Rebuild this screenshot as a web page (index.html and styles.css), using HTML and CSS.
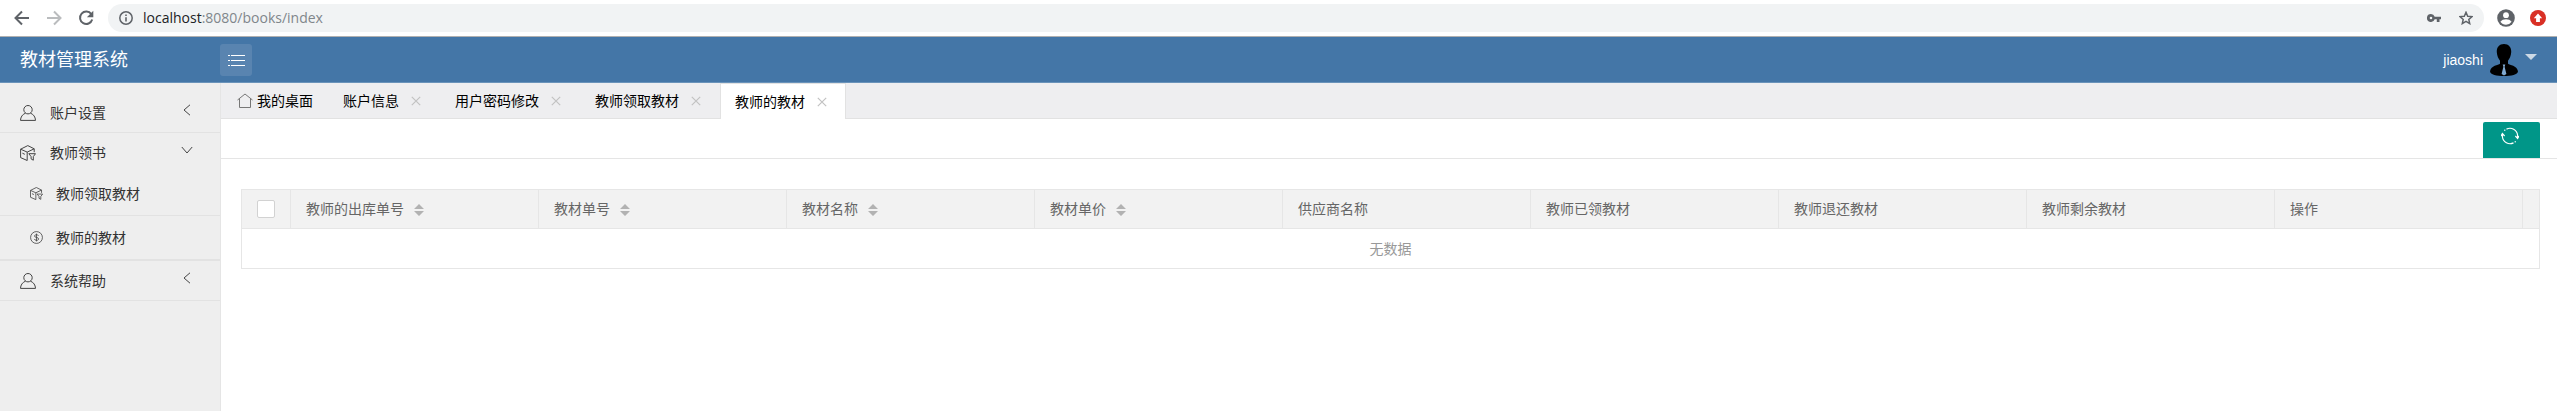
FILE: index.html
```html
<!DOCTYPE html>
<html lang="zh-CN">
<head>
<meta charset="utf-8">
<title>教材管理系统</title>
<link rel="stylesheet" href="styles.css">
</head>
<body>
<svg class="defs" aria-hidden="true">
  <symbol id="user" viewBox="0 0 16 16"><circle cx="8" cy="4.700" r="4.200"/><path d="M5.400 8.200C2.400 9.400.6 12 .5 15.400h15C15.400 12 13.600 9.400 10.600 8.200"/></symbol>
  <symbol id="box" viewBox="0 0 16 16"><path d="M.6 4.200 7.800.6l6.400 3.200-7 3.300zM.6 4.200v8.400l6.600 2.900V7.100M14.200 3.800v3.400M2.400 8.200l2.400 1.100M8.800 8.700h6.700l-2.200 2.900v3.600l-2.200-1.300v-2.300z"/></symbol>
  <symbol id="dollar" viewBox="0 0 16 16"><circle cx="8" cy="8" r="7.300"/><path d="M10.400 5.800C10 4.900 9.200 4.600 8 4.600c-1.400 0-2.400.5-2.400 1.600 0 2.500 5 1 5 3.600 0 1.100-1 1.700-2.500 1.700s-2.400-.5-2.700-1.600M8 3.200v9.600"/></symbol>
  <symbol id="left" viewBox="0 0 12 12"><path d="M9 .8 3 6l6 5.200"/></symbol>
  <symbol id="down" viewBox="0 0 12 12"><path d="m.8 3 5.200 6 5.200-6"/></symbol>
  <symbol id="close" viewBox="0 0 10 10"><path d="m.8.8 8.400 8.400M9.200.8.8 9.200"/></symbol>
  <symbol id="sort" viewBox="0 0 10 12"><path d="M5 0l5 5H0zM0 7h10l-5 5z"/></symbol>
</svg>

<div class="browser">
  <div class="browser-nav">
    <button class="plain" aria-label="后退"><svg class="i16" viewBox="0 0 16 16"><path class="nav-stroke" d="M15 8H2M8 1.500 1.500 8 8 14.500"/></svg></button>
    <button class="plain" aria-label="前进"><svg class="i16" viewBox="0 0 16 16"><path class="nav-stroke nav-off" d="M1 8h13M8 1.500 14.500 8 8 14.500"/></svg></button>
    <button class="plain" aria-label="刷新"><svg class="i16" viewBox="0 0 16 16"><path class="nav-stroke" d="M13.300 4.200A6.200 6.200 0 1 0 14.200 9.500"/><path class="nav-fill" d="M15.300.8v6.400H8.900z"/></svg></button>
  </div>
  <div class="address">
    <svg class="i14" viewBox="0 0 14 14"><circle class="info" cx="7" cy="7" r="6.200"/><path class="nav-fill" d="M6.200 6.200h1.600v4.300H6.200zM6.200 3.400h1.600V5H6.200z"/></svg>
    <span class="url">localhost<span class="url-path">:8080/books/index</span></span>
    <svg class="i14" viewBox="0 0 14 14"><path class="nav-fill" fill-rule="evenodd" d="M4 3a4 4 0 1 0 3.700 5.300h2.100V11h2.700V8.300H14V5.700H7.700A4 4 0 0 0 4 3zm0 2.700a1.300 1.300 0 1 1 0 2.600 1.300 1.300 0 0 1 0-2.600z"/></svg>
    <svg class="i14 star" viewBox="0 0 14 14"><path class="info" d="m7 1.300 1.700 3.900 4.300.4-3.200 2.800.9 4.200L7 10.400l-3.700 2.200.9-4.200L1 5.600l4.300-.4z"/></svg>
  </div>
  <svg class="i18" viewBox="0 0 18 18"><circle class="nav-fill" cx="9" cy="9" r="8.800"/><circle class="white" cx="9" cy="6.200" r="2.900"/><path class="white" d="M3.400 12.800c1.200-1.700 3.300-2.500 5.600-2.500s4.400.8 5.600 2.500A6.800 6.800 0 0 1 9 15.800a6.800 6.800 0 0 1-5.600-3z"/></svg>
  <svg class="i16 update" viewBox="0 0 16 16"><circle class="red" cx="8" cy="8" r="8"/><path class="white" d="m8 3.500 4.200 4.700H9.900V12H6.100V8.200H3.800z"/></svg>
</div>

<header class="header">
  <h1 class="brand">教材管理系统</h1>
  <button class="toggle" aria-label="菜单"><svg viewBox="0 0 18 12"><path d="M4 1.500h14M4 6.500h14M4 11.500h14M1 1.500h2M1 6.500h2M1 11.500h2"/></svg></button>
  <a class="account" href="#">
    <span>jiaoshi</span>
    <svg class="avatar" viewBox="0 0 28 32"><path d="M14 0c5 0 7.500 3.600 7.200 8.300-.2 3.700-1.700 6.500-3.200 8.500v3c1.700 1.500 9 1.700 9.900 7.200.6 3.500-6.500 5-13.900 5S-.5 30.500.1 27c.9-5.500 8.200-5.700 9.900-7.200v-3C8.500 14.800 7 12 6.800 8.300 6.500 3.600 9 0 14 0z"/><path class="tie" d="M12.700 20.500h2.600l-.7 2.200 1.800 7.300-2.400 1.500-2.400-1.500 1.800-7.300z"/></svg>
    <svg class="caret" viewBox="0 0 12 6"><path d="M0 0h12L6 6z"/></svg>
  </a>
</header>

<div class="body">
  <nav class="side">
    <div class="group">
      <a class="item" href="#"><svg class="i16 line"><use href="#user"/></svg><span>账户设置</span><svg class="chev line"><use href="#left"/></svg></a>
    </div>
    <div class="group">
      <a class="item" href="#"><svg class="i16 line"><use href="#box"/></svg><span>教师领书</span><svg class="chev line"><use href="#down"/></svg></a>
      <a class="sub" href="#"><svg class="i12 line"><use href="#box"/></svg><span>教师领取教材</span></a>
      <a class="sub" href="#"><svg class="i12 line"><use href="#dollar"/></svg><span>教师的教材</span></a>
    </div>
    <div class="group">
      <a class="item" href="#"><svg class="i16 line"><use href="#user"/></svg><span>系统帮助</span><svg class="chev line"><use href="#left"/></svg></a>
    </div>
  </nav>

  <main class="main">
    <ul class="tabs">
      <li class="tab"><svg class="i16 home line" viewBox="0 0 16 16"><path d="M.5 7 8 1l7.500 6M2.500 5.500v9h11v-9"/></svg><a href="#">我的桌面</a></li>
      <li class="tab"><a href="#">账户信息</a><button class="close" aria-label="关闭"><svg><use href="#close"/></svg></button></li>
      <li class="tab"><a href="#">用户密码修改</a><button class="close" aria-label="关闭"><svg><use href="#close"/></svg></button></li>
      <li class="tab"><a href="#">教师领取教材</a><button class="close" aria-label="关闭"><svg><use href="#close"/></svg></button></li>
      <li class="tab active"><a href="#">教师的教材</a><button class="close" aria-label="关闭"><svg><use href="#close"/></svg></button></li>
    </ul>
    <div class="toolbar">
      <button class="refresh" aria-label="刷新"><svg viewBox="0 0 18 18"><path d="M5.500 2.100A7.700 7.700 0 0 1 16.600 8.200v3M12.500 15.900A7.700 7.700 0 0 1 1.400 9.800v-3M14.400 9l2.200 2.400L18 9M0 9l1.400-2.400L3.600 9M3.300 3.600l1-.8M14.700 14.400l-1 .8"/></svg></button>
    </div>
    <div class="content">
      <table class="grid">
        <thead>
          <tr>
            <th class="col-check"><input type="checkbox" aria-label="全选"></th>
            <th>教师的出库单号<svg class="sort"><use href="#sort"/></svg></th>
            <th>教材单号<svg class="sort"><use href="#sort"/></svg></th>
            <th>教材名称<svg class="sort"><use href="#sort"/></svg></th>
            <th>教材单价<svg class="sort"><use href="#sort"/></svg></th>
            <th>供应商名称</th>
            <th>教师已领教材</th>
            <th>教师退还教材</th>
            <th>教师剩余教材</th>
            <th>操作</th>
            <th class="col-end"></th>
          </tr>
        </thead>
        <tbody>
          <tr><td colspan="11">无数据</td></tr>
        </tbody>
      </table>
    </div>
  </main>
</div>
</body>
</html>
```
FILE: styles.css
```css
* { box-sizing: border-box; }

body {
  margin: 0;
  min-height: 100vh;
  display: flex;
  flex-direction: column;
  background: #fff;
  color: #333;
  font: 14px/24px "Liberation Sans", "Noto Sans CJK SC", sans-serif;
}

a { color: inherit; text-decoration: none; }
button { padding: 0; border: 0; background: none; cursor: pointer; }
svg { display: block; flex: none; }

.defs { position: absolute; width: 0; height: 0; }
.i12 { width: 13px; height: 13px; }
.i14 { width: 14px; height: 14px; }
.i16 { width: 16px; height: 16px; }
.i18 { width: 18px; height: 18px; }
.line { fill: none; stroke: #444; stroke-width: 1; }

/* browser bar */
.browser {
  display: flex;
  align-items: center;
  height: 37px;
  padding: 0 11px 0 14px;
  border-bottom: 1px solid #b0b0b0;
}
.browser-nav { display: flex; gap: 16px; margin-right: 14px; }
.address {
  flex: 1;
  display: flex;
  align-items: center;
  height: 28px;
  margin-right: 13px;
  padding: 0 11px;
  border-radius: 14px;
  background: #f1f3f4;
}
.url {
  flex: 1;
  margin-left: 10px;
  color: #202124;
  font: 14px/20px "Open Sans", sans-serif;
}
.url-path { color: #80868b; }
.star { margin-left: 18px; }
.update { margin-left: 15px; }
.nav-stroke { fill: none; stroke: #5f6368; stroke-width: 2; }
.nav-off { stroke: #babcbe; }
.nav-fill { fill: #5f6368; }
.info { fill: none; stroke: #5f6368; stroke-width: 1.5; }
.white { fill: #fff; }
.red { fill: #d93025; }

/* header */
.header {
  display: flex;
  align-items: center;
  height: 46px;
  padding: 0 20px;
  border-bottom: 1px solid #6a93ba;
  background: #4476a7;
  color: #fff;
}
.brand { width: 200px; margin: 0; font-size: 18px; line-height: 26px; font-weight: 400; }
.toggle {
  display: grid;
  place-items: center;
  width: 32px;
  height: 32px;
  border-radius: 3px;
  background: #5984b0;
}
.toggle svg { width: 18px; height: 12px; stroke: #fff; stroke-width: 1; }
.account { display: flex; align-items: center; gap: 7px; margin-left: auto; }
.avatar { width: 28px; height: 32px; }
.tie { fill: #7fa8cf; }
.caret { width: 12px; height: 6px; margin-bottom: 6px; fill: #ccd9e6; }

/* side menu */
.body { flex: 1; display: flex; }
.side {
  width: 221px;
  padding-top: 10px;
  border-right: 1px solid #e5e5e5;
  background: #eee;
}
.group { border-bottom: 1px solid #e2e2e2; }
.item { display: flex; align-items: center; gap: 14px; height: 39px; padding: 0 27px 0 20px; }
.chev { width: 12px; height: 12px; margin: 0 0 6px auto; }
.sub {
  display: flex;
  align-items: center;
  gap: 13px;
  height: 44px;
  padding-left: 30px;
  border-bottom: 1px solid #e2e2e2;
}

/* tabs */
.main { flex: 1; min-width: 0; }
.tabs {
  display: flex;
  height: 36px;
  margin: 0;
  padding: 0 1px;
  border-bottom: 1px solid #e2e2e2;
  background: #eeeef0;
  list-style: none;
  color: #000;
}
.tab { display: flex; align-items: center; height: 36px; padding: 0 15px; white-space: nowrap; }
.home { margin-right: 4px; stroke: #777; }
.active { border: 1px solid #e2e2e2; border-width: 1px 1px 0; padding: 0 14px; background: #fff; }
.close { display: grid; place-items: center; width: 18px; height: 18px; margin-left: 8px; }
.close svg { width: 10px; height: 10px; stroke: #c2c2c2; stroke-width: 1.2; }

.toolbar {
  display: flex;
  justify-content: flex-end;
  height: 40px;
  padding: 3px 17px 0;
  border-bottom: 1px solid #e5e5e5;
}
.refresh {
  display: flex;
  justify-content: center;
  width: 57px;
  padding: 5px 3px 0 0;
  border-radius: 2px 2px 0 0;
  background: #009688;
}
.refresh svg { width: 18px; height: 18px; fill: none; stroke: #fff; stroke-width: 1.2; }

/* table */
.content { padding: 30px 17px 0 20px; }
.grid {
  width: 100%;
  table-layout: fixed;
  border-collapse: collapse;
  border: 1px solid #e6e6e6;
  color: #666;
}
.grid th {
  height: 39px;
  padding: 0 15px;
  border: 1px solid #e6e6e6;
  background: #f2f2f2;
  font-weight: 400;
  text-align: left;
  white-space: nowrap;
}
.grid td { height: 40px; padding: 0; color: #999; text-align: center; }
.grid .col-check { width: 49px; }
.grid .col-end { width: 17px; padding: 0; }
.grid input {
  appearance: none;
  display: block;
  width: 18px;
  height: 18px;
  margin: 0;
  border: 1px solid #d2d2d2;
  border-radius: 2px;
  background: #fff;
}
.sort { display: inline-block; width: 10px; height: 12px; margin-left: 10px; vertical-align: -2px; fill: #b2b2b2; }
```
